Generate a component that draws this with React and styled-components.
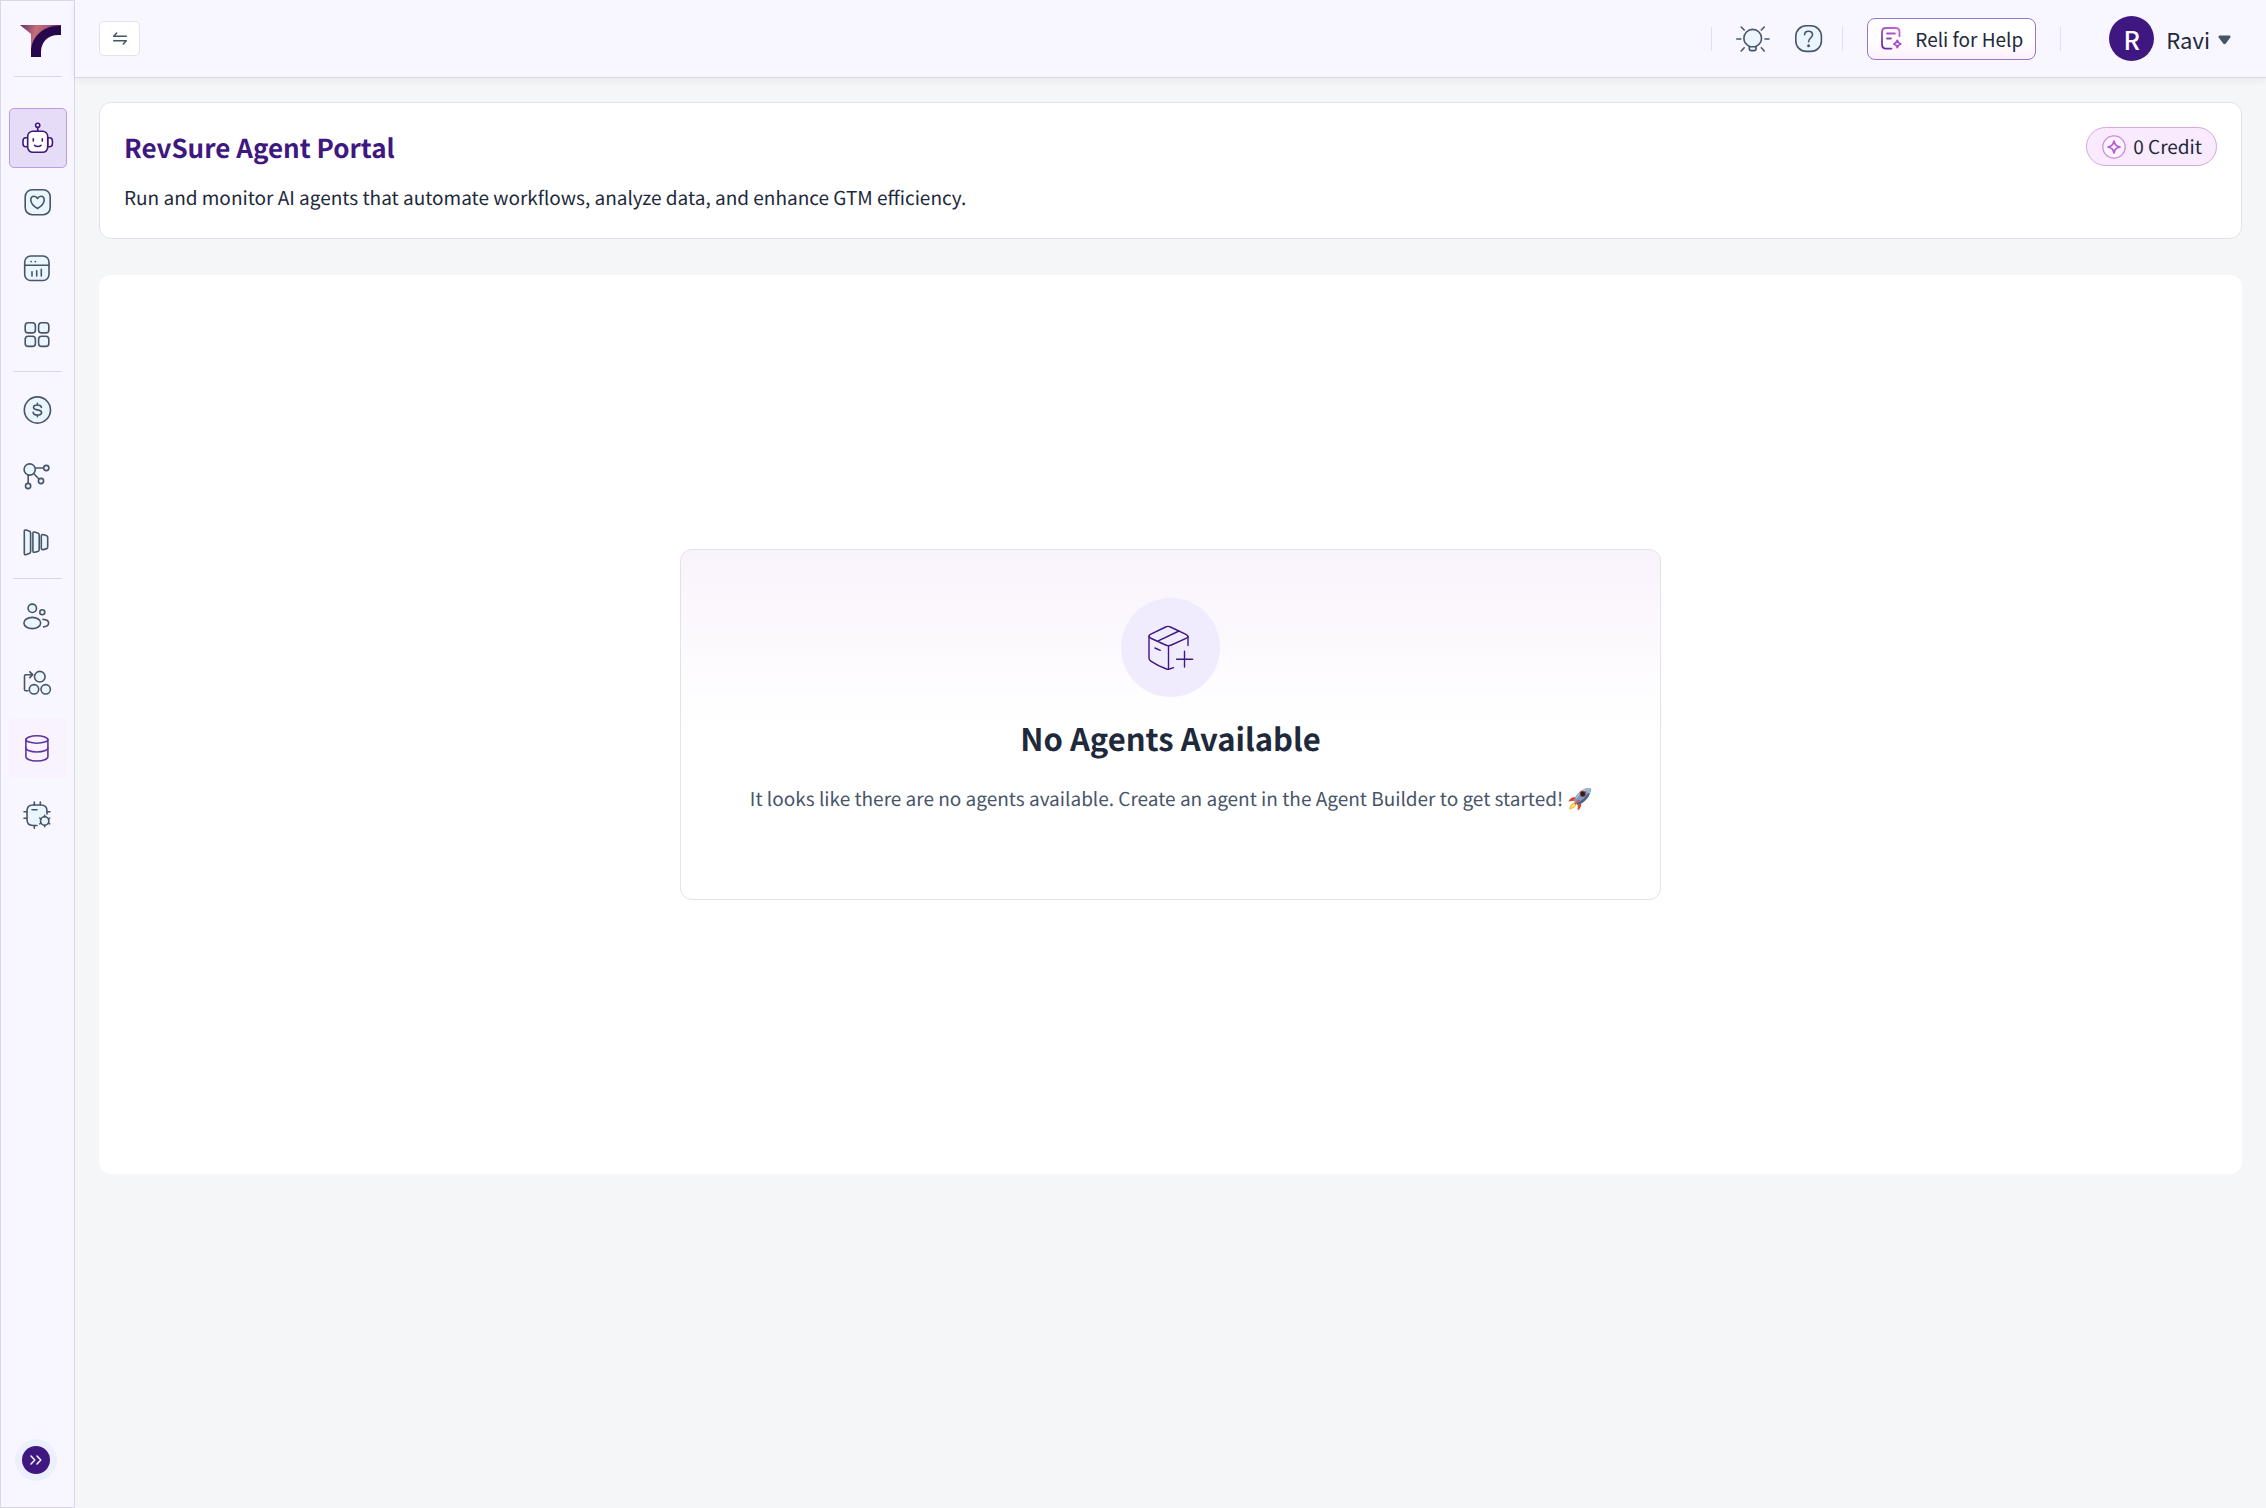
import React from 'react';
import styled, { createGlobalStyle } from 'styled-components';

const GlobalStyle = createGlobalStyle`
  * {
    box-sizing: border-box;
  }

  body {
    margin: 0;
    background: #f5f6f8;
    color: #1e293b;
    font-family: 'Noto Sans CJK SC', 'Noto Sans', sans-serif;
    font-size: 19px;
    line-height: 28px;
    text-rendering: geometricPrecision;
  }

  button {
    font: inherit;
    color: inherit;
    cursor: pointer;
  }

  svg {
    display: block;
    flex-shrink: 0;
    overflow: visible;
  }
`;

const Layout = styled.div`
  display: flex;
  min-height: 100vh;
`;

const Sidebar = styled.nav`
  display: flex;
  flex-direction: column;
  align-items: center;
  width: 75px;
  flex-shrink: 0;
  padding: 24px 0 33px;
  background: #f8f6ff;
  border: 1px solid #d9d6ea;
`;

const LogoLink = styled.a`
  display: block;
  padding: 0 0 17px 6px;
  border-bottom: 1px solid #d9d6ea;
`;

const NavGroup = styled.ul`
  display: flex;
  flex-direction: column;
  gap: 6px;
  margin: 0;
  padding: ${({ $first }) => ($first ? '31px 0 4px' : '0')};
  list-style: none;
`;

const NavDivider = styled.hr`
  width: 49px;
  height: 1px;
  margin: 7px 0;
  border: 0;
  background: #d9d6ea;
`;

const NavLink = styled.a`
  display: flex;
  align-items: center;
  justify-content: center;
  width: 58px;
  height: 60px;
  border: 1px solid ${({ $active }) => ($active ? '#b79fdc' : 'transparent')};
  border-radius: 5px;
  background: ${({ $active, $hovered }) =>
    $active ? '#e7dcf8' : $hovered ? '#f8f3fd' : 'transparent'};
  color: ${({ $active, $hovered }) =>
    $active ? '#3f1780' : $hovered ? '#5f31a6' : '#475569'};
`;

const ExpandButton = styled.button`
  display: flex;
  align-items: center;
  justify-content: center;
  width: 28px;
  height: 28px;
  margin-top: auto;
  margin-right: 3px;
  padding: 0;
  border: 0;
  border-radius: 50%;
  background: #3f1780;
  box-shadow: 0 0 0 7px #eceffd;
  color: #fff;
`;

const Page = styled.div`
  flex: 1;
  min-width: 0;
`;

const TopBar = styled.header`
  display: flex;
  align-items: center;
  gap: 20px;
  height: 78px;
  padding: 0 35px 0 24px;
  background: #f8f6ff;
  border-bottom: 1px solid #d8dae3;
  box-shadow: 0 2px 8px rgba(30, 41, 59, 0.06);
`;

const SwitchButton = styled.button`
  display: flex;
  align-items: center;
  justify-content: center;
  width: 41px;
  height: 35px;
  margin-right: auto;
  padding: 0;
  background: #fff;
  border: 1px solid #e2e3ea;
  border-radius: 5px;
  color: #475569;
`;

const Separator = styled.span`
  width: 1px;
  height: 24px;
  background: #e0e0ea;
`;

const Tools = styled.div`
  display: flex;
  align-items: center;
  gap: 25px;
  padding-left: 4px;
`;

const IconButton = styled.button`
  padding: 0;
  border: 0;
  background: none;
  color: #475569;
`;

const HelpButton = styled.button`
  display: flex;
  align-items: center;
  gap: 13px;
  height: 42px;
  margin: 0 4px;
  padding: 0 12px 0 13px;
  background: linear-gradient(#fff 50%, #fcf0fd);
  border: 1px solid #9a74c8;
  border-radius: 8px;
  white-space: nowrap;
`;

const Account = styled.button`
  display: flex;
  align-items: center;
  gap: 12px;
  padding: 0 0 0 28px;
  border: 0;
  background: none;
  font-size: 22px;
`;

const Avatar = styled.span`
  display: flex;
  align-items: center;
  justify-content: center;
  width: 45px;
  height: 45px;
  border-radius: 50%;
  background: #3f1780;
  color: #fff;
  font-size: 25px;
  font-weight: 500;
`;

const UserName = styled.span`
  display: flex;
  align-items: center;
  gap: 8px;
`;

const Content = styled.main`
  display: flex;
  flex-direction: column;
  gap: 36px;
  padding: 24px;
`;

const IntroCard = styled.section`
  display: flex;
  align-items: flex-start;
  justify-content: space-between;
  padding: 24px;
  background: #fff;
  border: 1px solid #e2e3ea;
  border-radius: 12px;
`;

const PageTitle = styled.h1`
  margin: 0;
  color: #3f1780;
  font-size: 26px;
  font-weight: 700;
  line-height: 42px;
`;

const PageText = styled.p`
  margin: 15px 0 2px;
`;

const CreditBadge = styled.div`
  display: flex;
  align-items: center;
  gap: 7px;
  height: 39px;
  padding: 0 14px 0 15px;
  background: #faeafd;
  border: 1px solid #d3a9df;
  border-radius: 20px;
`;

const Panel = styled.section`
  display: flex;
  align-items: center;
  justify-content: center;
  padding: 274px 24px;
  background: #fff;
  border-radius: 12px;
`;

const EmptyCard = styled.div`
  display: flex;
  flex-direction: column;
  align-items: center;
  padding: 48px 69px 72px;
  background: linear-gradient(#f9f3fc, #fff 50%);
  border: 1px solid #e2e3ea;
  border-radius: 12px;
  text-align: center;
`;

const EmptyIcon = styled.div`
  display: flex;
  align-items: center;
  justify-content: center;
  width: 99px;
  height: 99px;
  border-radius: 50%;
  background: #f0ecfd;
  color: #3f1780;
`;

const EmptyTitle = styled.h2`
  margin: 17px 0 23px;
  font-size: 31px;
  font-weight: 700;
  line-height: 48px;
`;

const EmptyText = styled.p`
  display: flex;
  align-items: center;
  gap: 5px;
  margin: 0 0 14px;
  color: #475569;
`;

const tint = '#ebf5fe';

const NavIcon = ({ children, size = 28, strokeWidth = 1.6 }) => (
  <svg
    width={size}
    height={size}
    viewBox={`0 0 ${size} ${size}`}
    fill="none"
    stroke="currentColor"
    strokeWidth={strokeWidth}
    strokeLinecap="round"
    strokeLinejoin="round"
    aria-hidden="true"
  >
    {children}
  </svg>
);

const Logo = () => (
  <svg width="42" height="34" viewBox="0 0 42 34" aria-hidden="true">
    <defs>
      <linearGradient id="logoWarm" x1="0" y1="0" x2="1" y2="0.2">
        <stop offset="0" stopColor="#5a2f72" />
        <stop offset="0.4" stopColor="#c46f78" />
        <stop offset="0.7" stopColor="#a4566f" />
        <stop offset="1" stopColor="#3c1556" />
      </linearGradient>
    </defs>
    <path d="M0 0H41V4L24 12L13 32H11V9Z" fill="url(#logoWarm)" />
    <path d="M11 32V27C11 12 23 1 38 1H41V10H38C28 10 21 17 21 27V32Z" fill="#27084f" />
  </svg>
);

const RobotIcon = () => (
  <NavIcon size={32}>
    <circle cx="15.7" cy="3.3" r="2.1" fill="#fff" />
    <path d="M15.7 5.5V9.3" />
    <path d="M5.7 15.7H4A3 3 0 0 0 1 18.7V21.7A3 3 0 0 0 4 24.7H5.7ZM25.7 15.7H27.4A3 3 0 0 1 30.4 18.7V21.7A3 3 0 0 1 27.4 24.7H25.7Z" fill="#fff" />
    <rect x="5.7" y="9.3" width="20" height="21" rx="5" fill="#fff" />
    <path d="M11.3 16.7V19M20.3 16.7V19M12.6 23.4C14.2 24.8 17.4 24.8 19 23.4" />
  </NavIcon>
);

const HeartIcon = () => (
  <NavIcon>
    <rect x="1.2" y="1.7" width="25" height="25" rx="7" fill={tint} />
    <path d="M13.5 20.5C10 18.4 6.8 15.4 6.8 12C6.8 9.6 8.3 8.3 10 8.3C11.6 8.3 12.8 9.2 13.5 10.5C14.2 9.2 15.4 8.3 17 8.3C18.7 8.3 20.2 9.6 20.2 12C20.2 15.4 17 18.4 13.5 20.5Z" />
  </NavIcon>
);

const ReportIcon = () => (
  <NavIcon>
    <rect x="0.7" y="2" width="24.3" height="24.5" rx="6" fill={tint} />
    <path d="M0.7 11.3H25M8 17.7V22M12.7 16.7V22M17.3 15.3V22M7 7.6H7.2M11.2 7.6H11.4" />
  </NavIcon>
);

const GridIcon = () => (
  <NavIcon>
    {[[1.2, 2.7], [14.6, 2.7], [1.2, 16.2], [14.6, 16.2]].map(([x, y]) => (
      <rect key={`${x}-${y}`} x={x} y={y} width="10.2" height="10.2" rx="3" fill={tint} />
    ))}
  </NavIcon>
);

const DollarIcon = () => (
  <NavIcon>
    <circle cx="13.4" cy="15" r="13.1" fill={tint} />
    <path d="M13.4 8.3V10M13.4 20V21.7M17.4 12.4C17.2 10.8 15.6 10 13.4 10C11 10 9.5 10.9 9.5 12.5C9.5 16 17.6 13.8 17.6 17.4C17.6 19.2 16 20 13.4 20C11 20 9.3 19.2 9.2 17.4" />
  </NavIcon>
);

const NodesIcon = () => (
  <NavIcon>
    <path d="M11.3 7H19.5M9.6 12.5L15 18M4.2 13.7V22.3" />
    <circle cx="5.7" cy="8.5" r="5.6" fill={tint} />
    <circle cx="22.3" cy="7" r="2.6" fill={tint} />
    <circle cx="17" cy="20" r="2.6" fill={tint} />
    <circle cx="4.1" cy="25" r="2.6" fill={tint} />
  </NavIcon>
);

const FunnelIcon = () => (
  <NavIcon>
    <path d="M2 3L5.2 4Q6.6 4.4 6.6 6V24.5Q6.6 26 5.2 26.5L2.2 27.6Q0.3 28 0.3 26.4V4.4Q0.3 2.6 2 3Z" fill={tint} />
    <path d="M10.5 5L13.8 6Q15.2 6.4 15.2 8V22.4Q15.2 24 13.8 24.4L10.6 25.3Q8.9 25.5 8.9 24V6.4Q8.9 4.7 10.5 5Z" fill={tint} />
    <path d="M19 7.6L22.2 8.5Q23.7 9 23.7 10.3V20Q23.7 21.6 22.2 21.9L19 22.6Q17.3 22.9 17.3 21.3V9Q17.3 7.3 19 7.6Z" fill={tint} />
  </NavIcon>
);

const PeopleIcon = () => (
  <NavIcon>
    <circle cx="8.3" cy="6.3" r="4.2" fill={tint} />
    <circle cx="18.3" cy="10.2" r="2.5" fill={tint} />
    <ellipse cx="8.3" cy="21" rx="8.4" ry="5.6" fill={tint} />
    <path d="M19 17.4C22.6 17.6 24.6 18.9 24.6 21.1C24.6 23.2 22.7 24.6 19.6 24.9" />
  </NavIcon>
);

const FlowIcon = () => (
  <NavIcon>
    <path d="M4 22.7H1.8Q0.5 22.7 0.5 21.4V8Q0.5 6.7 1.8 6.7H8.7M5.8 3.8L8.8 6.7L5.8 9.6" />
    <circle cx="15.8" cy="8.7" r="5.3" fill={tint} />
    <circle cx="10" cy="21.3" r="4.7" fill={tint} />
    <circle cx="21.7" cy="21.3" r="4.7" fill={tint} />
  </NavIcon>
);

const DatabaseIcon = () => (
  <NavIcon>
    <path d="M1.9 5.5V22.8C1.9 25 6.6 27 12.9 27C19.2 27 23.9 25 23.9 22.8V5.5" />
    <ellipse cx="12.9" cy="5.5" rx="11" ry="3.7" />
    <path d="M1.9 14C1.9 16.2 6.6 18 12.9 18C19.2 18 23.9 16.2 23.9 14" />
  </NavIcon>
);

const ChipIcon = () => (
  <NavIcon>
    <path d="M13 25.5H9Q3 25.5 3 19.5V11Q3 5 9 5H17Q23 5 23 11V14" fill={tint} />
    <path d="M10.3 2V5M16.3 2V5M0 11.7H3M0 18.3H3M23 11.7H26M10.3 25.5V28.3M8 9.8H13" />
    <circle cx="20.7" cy="21" r="4.2" fill={tint} />
    <path d="M20.7 15.2V16.8M20.7 25.2V26.8M15.7 18.1L17.1 18.9M24.3 23.1L25.7 23.9M15.7 23.9L17.1 23.1M24.3 18.9L25.7 18.1" />
  </NavIcon>
);

const BulbIcon = () => (
  <NavIcon size={34}>
    <path d="M13.3 24.3C10 22.6 7.9 19.9 7.9 16.2A8.8 8.8 0 0 1 25.5 16.2C25.5 19.9 23.4 22.6 20.1 24.3V26.5Q20.1 28.6 18 28.6H15.4Q13.3 28.6 13.3 26.5ZM13.3 24.7H20.1" fill={tint} />
    <path d="M0.8 17H4.8M29 17H33M5.2 5L8.2 8M28.3 5L25.3 8M5.2 29L8.2 25.8M28.3 29L25.3 25.8" />
  </NavIcon>
);

const QuestionIcon = () => (
  <NavIcon size={27}>
    <rect x="0.8" y="0.8" width="25.6" height="25.6" rx="10.5" fill={tint} />
    <path d="M9.6 9.8C9.6 7.5 11.2 6.3 13.5 6.3C15.9 6.3 17.5 7.6 17.5 9.7C17.5 12.8 13.6 12.8 13.6 16.8" />
    <circle cx="13.6" cy="20.8" r="0.7" fill="currentColor" />
  </NavIcon>
);

const ReliIcon = () => (
  <svg width="21" height="23" viewBox="0 0 21 23" fill="none" stroke="url(#reliStroke)" strokeWidth="1.8" strokeLinecap="round" strokeLinejoin="round" aria-hidden="true">
    <defs>
      <linearGradient id="reliStroke" gradientUnits="userSpaceOnUse" x1="16" y1="1" x2="2" y2="22">
        <stop offset="0" stopColor="#cf62d8" />
        <stop offset="1" stopColor="#5b2d9e" />
      </linearGradient>
    </defs>
    <path d="M10.5 21.6H5Q1 21.6 1 17.6V5Q1 1 5 1H14.5Q18.5 1 18.5 5V9M6 6.5H14M6 11.5H10" />
    <path d="M16.3 13.3C16.8 15.5 17.4 16.2 19.8 17C17.4 17.7 16.8 18.4 16.3 20.6C15.8 18.4 15.1 17.7 12.8 17C15.1 16.2 15.8 15.5 16.3 13.3Z" stroke="#a84fcb" />
  </svg>
);

const CreditIcon = () => (
  <svg width="24" height="24" viewBox="0 0 24 24" fill="none" stroke="#b55bd6" aria-hidden="true">
    <circle cx="12" cy="12" r="11.2" fill="#fdf4ff" stroke="#c98be0" strokeWidth="1.2" />
    <path d="M12 6C12.9 9.9 14.1 11.1 18 12C14.1 12.9 12.9 14.1 12 18C11.1 14.1 9.9 12.9 6 12C9.9 11.1 11.1 9.9 12 6Z" strokeWidth="1.7" strokeLinejoin="round" />
  </svg>
);

const BoxPlusIcon = () => (
  <NavIcon size={46} strokeWidth={1.4}>
    <path d="M1 11.3Q1 10 2.4 9.3L17.6 2Q20 0.8 22.4 2L38 9.3Q40 10.3 40 12V20.5M1 11.3V33Q1 35 2.8 36.2Q9 40.5 18.5 44Q20 44.4 21.5 44L25.5 42.6" />
    <path d="M1 11.3Q1.4 12.6 3.4 13.5L17.6 20Q20.5 21.3 23.4 20L38 13.3Q40 12.3 40 11.4M20.5 21V44M31 6L9.7 16.2M7 23L12.3 25.3M36.5 26.3V42M28.6 34.2H44.6" />
  </NavIcon>
);

const RocketIcon = () => (
  <svg width="23" height="24" viewBox="0 0 23 24" role="img" aria-label="rocket">
    <path d="M7 15C3 16.5 1.5 19 1 22.6C4.8 22.2 7.6 20.4 9 17Z" fill="#f6c245" />
    <path d="M6.6 16.5C4.4 17.6 3.4 19 3 20.8C4.9 20.4 6.4 19.4 7.8 17.6Z" fill="#fbe88c" />
    <path d="M8.5 10L4.2 10.6Q1.8 11.5 0.3 14.4L6 13.8ZM13.4 15.6L12.8 19.4Q12.2 21.8 9.6 23.6L9.8 17.8Z" fill="#df4330" />
    <path d="M22.7 1C17 0.6 11.5 3.6 8 9L5.6 13.8L9.8 18L14.4 15.7C19.8 12 22.8 7 22.7 1Z" fill="#7d9cc4" />
    <path d="M22.7 1C20.5 7.2 15.5 12.8 8.4 16.6L9.8 18L14.4 15.7C19.8 12 22.8 7 22.7 1Z" fill="#4a628c" />
    <path d="M20.8 1.5C15.8 2.1 11.6 5.2 8.5 10.2L7.4 12.7C10.6 7.4 15.6 3.6 20.8 1.5Z" fill="#d5e4f5" />
    <path d="M22.7 1C20.4 0.8 18.2 1.2 16.1 2.1L21.5 7.1Q22.8 4 22.7 1Z" fill="#9db5d4" />
    <circle cx="14.8" cy="6.9" r="2.8" fill="#291f29" stroke="#c04338" strokeWidth="0.8" />
    <path d="M10.8 12.2L6.2 16.8L7.2 17.7L12 13.6Z" fill="#e24b34" />
  </svg>
);

const navGroups = [
  [
    { label: 'Favourites', icon: HeartIcon },
    { label: 'Reports', icon: ReportIcon },
    { label: 'Apps', icon: GridIcon },
  ],
  [
    { label: 'Revenue', icon: DollarIcon },
    { label: 'Attribution', icon: NodesIcon },
    { label: 'Funnel', icon: FunnelIcon },
  ],
  [
    { label: 'Audiences', icon: PeopleIcon },
    { label: 'Journeys', icon: FlowIcon },
    { label: 'Data', icon: DatabaseIcon, hovered: true },
    { label: 'Settings', icon: ChipIcon },
  ],
];

const NavItem = ({ label, icon: Icon, active, hovered }) => (
  <li>
    <NavLink href="#" aria-label={label} $active={active} $hovered={hovered}>
      <Icon />
    </NavLink>
  </li>
);

const App = () => {
  return (
    <>
      <GlobalStyle />
      <Layout>
        <Sidebar aria-label="Main">
          <LogoLink href="#" aria-label="Home">
            <Logo />
          </LogoLink>
          <NavGroup $first>
            <NavItem label="Agents" icon={RobotIcon} active />
          </NavGroup>
          {navGroups.map((items, index) => (
            <React.Fragment key={items[0].label}>
              {index > 0 && <NavDivider />}
              <NavGroup>
                {items.map((item) => (
                  <NavItem key={item.label} {...item} />
                ))}
              </NavGroup>
            </React.Fragment>
          ))}
          <ExpandButton aria-label="Expand menu">
            <svg width="12" height="10" viewBox="0 0 12 10" fill="none" stroke="currentColor" strokeWidth="1.5" strokeLinecap="round" strokeLinejoin="round">
              <path d="M1 1L4.8 5L1 9M7 1L10.8 5L7 9" />
            </svg>
          </ExpandButton>
        </Sidebar>

        <Page>
          <TopBar>
            <SwitchButton aria-label="Switch view">
              <svg width="14" height="13" viewBox="0 0 14 13" fill="none" stroke="currentColor" strokeWidth="1.5" strokeLinecap="round" strokeLinejoin="round">
                <path d="M13.3 4.3H0.7L3.7 1M0.7 8.7H13.3L10.3 12" />
              </svg>
            </SwitchButton>
            <Separator />
            <Tools>
              <IconButton aria-label="What's new">
                <BulbIcon />
              </IconButton>
              <IconButton aria-label="Help">
                <QuestionIcon />
              </IconButton>
            </Tools>
            <Separator />
            <HelpButton>
              <ReliIcon />
              Reli for Help
            </HelpButton>
            <Separator />
            <Account>
              <Avatar>R</Avatar>
              <UserName>
                Ravi
                <svg width="13" height="10" viewBox="0 0 13 10" aria-hidden="true">
                  <path d="M1.6 1.5H11.4Q13.2 1.7 12.3 3.4L7.8 9.6Q6.5 11 5.2 9.6L0.7 3.4Q-0.2 1.7 1.6 1.5Z" fill="#475569" />
                </svg>
              </UserName>
            </Account>
          </TopBar>

          <Content>
            <IntroCard>
              <div>
                <PageTitle>RevSure Agent Portal</PageTitle>
                <PageText>
                  Run and monitor AI agents that automate workflows, analyze data, and enhance GTM efficiency.
                </PageText>
              </div>
              <CreditBadge>
                <CreditIcon />
                0 Credit
              </CreditBadge>
            </IntroCard>

            <Panel>
              <EmptyCard>
                <EmptyIcon>
                  <BoxPlusIcon />
                </EmptyIcon>
                <EmptyTitle>No Agents Available</EmptyTitle>
                <EmptyText>
                  It looks like there are no agents available. Create an agent in the Agent Builder to get started!
                  <RocketIcon />
                </EmptyText>
              </EmptyCard>
            </Panel>
          </Content>
        </Page>
      </Layout>
    </>
  );
};

export default App;
